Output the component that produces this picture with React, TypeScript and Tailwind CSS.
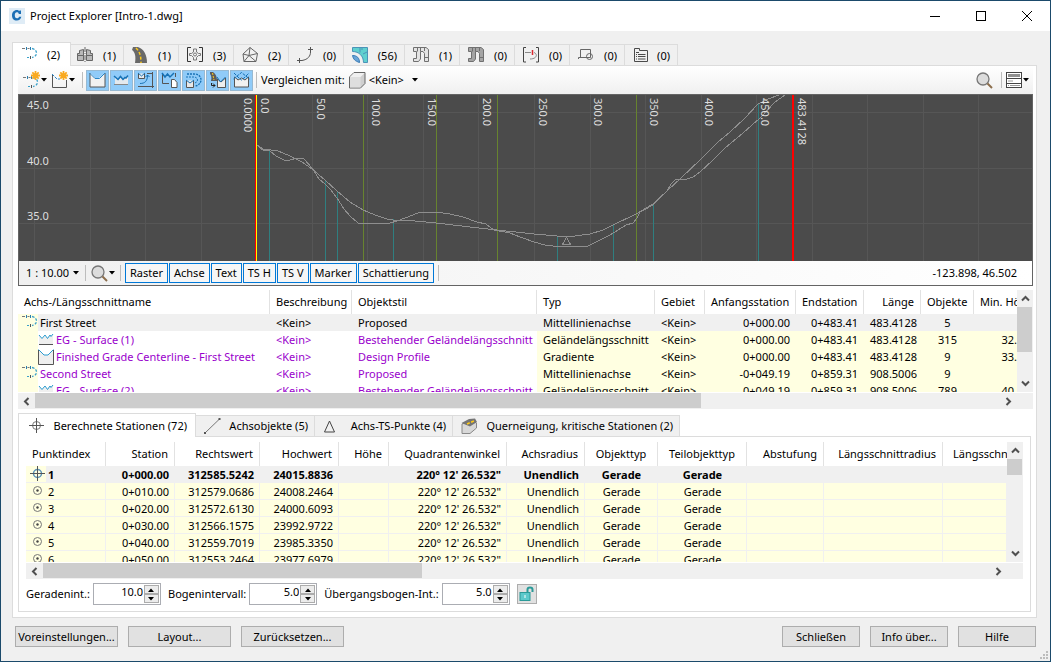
import React, { useState } from 'react';
import clsx from 'clsx';

type IconProps = { className?: string };

const Caret = ({ className }: IconProps) => (
  <svg width="6" height="4" viewBox="0 0 6 4" className={clsx('shrink-0', className)} aria-hidden="true">
    <path d="M0 0H6L3 3.5Z" fill="#000" />
  </svg>
);

/* ---------- icons ---------- */

const LogoIcon = () => (
  <svg width="16" height="16" viewBox="0 0 16 16" aria-hidden="true">
    <rect width="16" height="16" fill="#dfecf6" />
    <path d="M12 2.500V6H9.800C9.600 4.700 8.800 4.300 7.900 4.300C6.300 4.300 5.800 5.700 5.800 7.300C5.800 9 6.500 10.300 8 10.300C9 10.300 9.700 9.800 10 8.800H12.300C11.900 11.200 10.300 12.500 7.800 12.500C4.700 12.500 3 10.400 3 7.400C3 4.300 4.900 2 7.900 2C9 2 9.700 2.400 10.200 3.100L10.600 2.500Z" fill="#1c6fb5" />
  </svg>
);

const AlignmentShape = () => (
  <g fill="none">
    <path d="M0 1.500H3M5.500 1.500H7.500" stroke="#777" />
    <path d="M4.500 0V3M8.500 0V3" stroke="#2a7fb0" />
    <path d="M10 1.500C13 2 14.500 4 14.500 6C14.500 8.500 12.500 10 10 10.500" stroke="#3aa0c9" strokeWidth="1.300" strokeDasharray="2.500 1.500" />
    <path d="M5 10.500H7" stroke="#3aa0c9" />
    <path d="M8.500 9V12" stroke="#555" />
  </g>
);

const AlignmentIcon = ({ className }: IconProps) => (
  <svg width="16" height="12" viewBox="0 0 16 12" className={clsx('shrink-0', className)} aria-hidden="true">
    <AlignmentShape />
  </svg>
);

const AssemblyIcon = () => (
  <svg width="16" height="16" viewBox="0 0 16 16" fill="#b9b9b9" stroke="#666" aria-hidden="true">
    <path d="M2.500 3.500L6.500 2.500V8.500H0.500V6.500H2.500ZM0.500 8.500H6.500V13.500H0.500Z" />
    <path d="M13.500 3.500L9.500 2.500V8.500H15.500V6.500H13.500ZM9.500 8.500H15.500V13.500H9.500Z" />
    <path d="M8 0V16" strokeDasharray="5 1 1 1" />
  </svg>
);

const RoadIcon = () => (
  <svg width="16" height="16" viewBox="0 0 16 16" aria-hidden="true">
    <path d="M1 0H6C12 2 15 8 15 16H3C4 9 3 5 0 3Z" fill="#696969" />
    <path d="M4 1C8 5 9 9 9 16" stroke="#ffca18" strokeWidth="1.500" strokeDasharray="3 2" fill="none" />
  </svg>
);

const IntersectionIcon = () => (
  <svg width="16" height="16" viewBox="0 0 16 16" fill="none" aria-hidden="true">
    <path d="M4 0.500H0.500V14.500H4M12 0.500H15.500V14.500H12" stroke="#333" />
    <path d="M6.500 2V5L4.500 6.500H2.500V8.500H4.500L6.500 10.500V13H9.500V10.500L11.500 8.500H13.500V6.500H11.500L9.500 5V2Z" stroke="#777" />
    <circle cx="8" cy="7.500" r="1.500" stroke="#777" />
  </svg>
);

const SurfaceIcon = () => (
  <svg width="16" height="16" viewBox="0 0 16 16" fill="none" stroke="#666" aria-hidden="true">
    <path d="M8 0.500L1 7L2 14.500H14L15.500 6.500ZM8 0.500L7 8.500L1 7M7 8.500L15.500 6.500M7 8.500L2 14.500M7 8.500L14 14.500" />
  </svg>
);

const FeatureLineIcon = () => (
  <svg width="16" height="16" viewBox="0 0 16 16" fill="none" stroke="#555" aria-hidden="true">
    <path d="M0 13.500H5M2.500 11V16M11 2.500H16M13.500 0V5" />
    <path d="M5 13.500C11 12.500 13.500 9 13.500 5" />
  </svg>
);

const ParcelIcon = () => (
  <svg width="16" height="16" viewBox="0 0 16 16" aria-hidden="true">
    <path d="M0.500 0.500H15.500V15.500H11.500C11.500 9 7 4.500 0.500 4.500Z" fill="#5fd0cf" stroke="#4b93b8" />
    <path d="M8 1V5.500M11 7L15 5M10 1V3" stroke="#4b93b8" />
    <path d="M0.500 8.500C5 8.500 7.500 11 7.500 15.500C3 14 1.500 12.500 0.500 8.500Z" fill="#6aa5d8" stroke="#397bb5" />
  </svg>
);

const PipeIcon = ({ dark }: { dark?: boolean }) => (
  <svg width="16" height="16" viewBox="0 0 16 16" fill={dark ? '#a4a4a4' : '#e4e4e4'} stroke="#707070" aria-hidden="true">
    <path d="M0.500 0.500H13L15.500 2.500V14.500H11.500V6.500L10 4.500H7.500V12L5.500 14.500H0.500V11.500H3.500V4.500H0.500Z" />
    <path d="M4.500 0.500V4.500M11.500 0.500V4M7.500 0.500V4.500M11.500 10.500H15.500" />
  </svg>
);

const PressureIcon = () => (
  <svg width="16" height="16" viewBox="0 0 16 16" fill="none" aria-hidden="true">
    <path d="M3 0.500H0.500V15H3M13 0.500H15.500V15H13" stroke="#444" />
    <path d="M2 5.500H8M11 5.500C15 7 14 12 7 12" stroke="#888" />
    <path d="M9.500 3V8" stroke="#d9272e" strokeWidth="1.500" />
  </svg>
);

const ShapeIcon = () => (
  <svg width="16" height="16" viewBox="0 0 16 16" fill="none" stroke="#666" aria-hidden="true">
    <path d="M2.500 2.500H12.500V10.500H0.500V12M2.500 2.500V10.500" />
    <circle cx="11.500" cy="9.500" r="3" />
  </svg>
);

const ReportIcon = () => (
  <svg width="16" height="16" viewBox="0 0 16 16" fill="none" stroke="#4a4a4a" aria-hidden="true">
    <path d="M1.500 14.500V1.500H6.500V3.500H14.500V14.500Z" />
    <path d="M3 5.500H6M3 7.500H4M5 7.500H12.500M3 9.500H4M5 9.500H12.500M3 12H4M5 12H12.500" />
  </svg>
);

const Star = () => (
  <path d="M12.500 0V9M8 4.500H17M9.300 1.300L15.700 7.700M15.700 1.300L9.300 7.700" stroke="#f9a91f" strokeWidth="1.800" fill="none" />
);

const NewAlignmentIcon = () => (
  <svg width="18" height="18" viewBox="0 0 18 18" aria-hidden="true">
    <g transform="translate(0 5)"><AlignmentShape /></g>
    <Star />
  </svg>
);

const NewProfileIcon = () => (
  <svg width="18" height="18" viewBox="0 0 18 18" aria-hidden="true">
    <path d="M1.500 3.500V16.500H15.500V9" stroke="#555" fill="none" />
    <path d="M1 3L6 8H9" stroke="#2a87c8" fill="none" strokeDasharray="3 1" />
    <Star />
  </svg>
);

const ProfileIcon = () => (
  <svg width="17" height="16" viewBox="0 0 17 16" fill="none" aria-hidden="true">
    <path d="M1 1V15H16V1" fill="#f1f1f1" stroke="#555" />
    <path d="M1.500 1L6 6H10L15.500 1V0H1.500Z" fill="#90cbf8" />
    <path d="M0.500 1L6 6.500H10.500L16 1" stroke="#2a87c8" />
  </svg>
);

const SurfaceProfileIcon = () => (
  <svg width="17" height="16" viewBox="0 0 17 16" fill="none" aria-hidden="true">
    <path d="M2 5L5 8L8 5L10 8L12 6L15 4V12H2Z" fill="#e4e9ee" />
    <path d="M1 12.500H15" stroke="#888" />
    <path d="M1 4L5 7.500L7.500 4.500L10 7.500L12 5.500L13 6L15 3.500" stroke="#1772b5" strokeWidth="1.500" />
  </svg>
);

const ViewFrameIcon = () => (
  <svg width="17" height="16" viewBox="0 0 17 16" fill="none" aria-hidden="true">
    <path d="M1.500 1.500V6.500H7.500V1.500" fill="#e4e9ee" stroke="#555" />
    <path d="M1 1L4.500 4L8 1M3 11.500C8 11.500 10.500 9 10.500 3M8.500 5L10.500 3L12.500 5" stroke="#1772b5" />
    <path d="M15.500 0V16M1 14.500H17M10 1.500H15" stroke="#555" />
  </svg>
);

const QuickProfileIcon = () => (
  <svg width="17" height="16" viewBox="0 0 17 16" fill="none" aria-hidden="true">
    <path d="M1.500 2V11.500H8M14.500 1V5" stroke="#555" />
    <path d="M1 1L4 5L6.500 2L9 5L13 1" stroke="#1772b5" strokeWidth="1.500" />
    <path d="M10.500 7.500H13.500L16 10.500V15.500H10.500Z" fill="#fff" stroke="#555" />
  </svg>
);

const SuperimposedIcon = () => (
  <svg width="17" height="16" viewBox="0 0 17 16" fill="none" aria-hidden="true">
    <path d="M2 2H9C14 2 16 5 16 8C16 11 13 14 10 14" stroke="#1772b5" strokeDasharray="2 1" strokeWidth="1.300" />
    <path d="M1 5H9C11 5 12.500 6.500 12.500 8S11 11 9 11" stroke="#1772b5" strokeDasharray="2 1" />
    <path d="M1.500 8.500V15.500H8.500V8.500" stroke="#555" fill="#e8e8e8" />
    <path d="M1 8L5 11L9 8" stroke="#1772b5" />
  </svg>
);

const CorridorProfileIcon = () => (
  <svg width="17" height="16" viewBox="0 0 17 16" fill="none" aria-hidden="true">
    <path d="M1 0H4C7 2 8 5 8 9H2C3 5 2 3 1 2Z" fill="#5c5c5c" />
    <path d="M3.500 1L5 8" stroke="#ffca18" strokeDasharray="2 1" />
    <path d="M8.500 7V15.500H16.500V6L12 10Z" fill="#eee" stroke="#555" />
    <path d="M8 5L11.500 10L16.500 5" stroke="#1772b5" />
    <path d="M2.500 11V13.500H6M4 11.500L6 13.500L4 15.500" stroke="#222" />
  </svg>
);

const CantProfileIcon = () => (
  <svg width="17" height="16" viewBox="0 0 17 16" fill="none" aria-hidden="true">
    <path d="M1.500 5V15H15.500V5L12 8L8.500 6L5 8Z" fill="#f1f1f1" stroke="#555" />
    <path d="M0.500 7L8.500 0.500L16.500 7M1 1L6 6L8.500 8L11 6L16 1" stroke="#1772b5" strokeDasharray="3 1" />
  </svg>
);

const CubeIcon = () => (
  <svg width="17" height="17" viewBox="0 0 17 17" stroke="#666" strokeLinejoin="round" aria-hidden="true">
    <path d="M0.500 5L5 0.500H16V11.500L11.500 16H0.500Z" fill="#cfcfcf" />
    <path d="M1 5H11.500V15.500H1Z" fill="#dedede" stroke="none" />
    <path d="M1 5L5 1H15.500L11.500 5Z" fill="#f0f0f0" stroke="none" />
  </svg>
);

const SearchIcon = () => (
  <svg width="17" height="17" viewBox="0 0 17 17" aria-hidden="true">
    <circle cx="7" cy="7" r="6" fill="#dcdcdc" stroke="#777" strokeWidth="1.300" />
    <path d="M11.500 11.500L16 16" stroke="#8b6d4b" strokeWidth="2" />
  </svg>
);

const PanelIcon = () => (
  <svg width="17" height="17" viewBox="0 0 17 17" aria-hidden="true">
    <rect x="0.500" y="0.500" width="15" height="15" fill="#fff" stroke="#444" />
    <path d="M2 3.500H14" stroke="#909090" strokeWidth="3" />
    <path d="M1 6.500H15M1 11.500H15" stroke="#444" />
    <path d="M2 9H7M2 13.500H3M4 13.500H14" stroke="#999" />
  </svg>
);

const TreeSurfaceIcon = () => (
  <svg width="16" height="14" viewBox="0 0 16 14" fill="none" className="shrink-0" aria-hidden="true">
    <path d="M1 2L4 5L7 3L9 5L12 2L15 2V11H1Z" fill="#efefef" />
    <path d="M1 11.500H15" stroke="#555" />
    <path d="M1 2L4 5.500L7 2L9.500 5.500L12 2L13 3.500L15 1" stroke="#2a9bd0" />
  </svg>
);

const TreeProfileIcon = () => (
  <svg width="16" height="16" viewBox="0 0 16 16" fill="none" className="shrink-0" aria-hidden="true">
    <path d="M0.500 1L6 6H10L15.500 1V15.500H0.500Z" fill="#efefef" />
    <path d="M0.500 1V15.500H15.500V1" stroke="#555" />
    <path d="M0.500 0.500L6 6H10L15.500 0.500" stroke="#2a9bd0" />
  </svg>
);

const CrosshairIcon = ({ blue }: { blue?: boolean }) => (
  <svg width="15" height="15" viewBox="0 0 15 15" fill="none" stroke="#555" aria-hidden="true">
    <circle cx="7.500" cy="7.500" r="4" stroke={blue ? '#5a93b8' : '#777'} strokeWidth={blue ? 1.5 : 1} />
    <path d="M0 7.500H15M7.500 0V15" />
  </svg>
);

const PointIcon = () => (
  <svg width="15" height="15" viewBox="0 0 15 15" fill="none" aria-hidden="true">
    <circle cx="7.500" cy="7.500" r="4" stroke="#777" />
    <circle cx="7.500" cy="7.500" r="1.200" fill="#444" />
  </svg>
);

const LineIcon = () => (
  <svg width="17" height="16" viewBox="0 0 17 16" aria-hidden="true">
    <path d="M1.500 14.500L15 1.500" stroke="#777" />
    <path d="M0 14H2V16H0ZM14.500 0H16.500V2H14.500Z" fill="#555" />
  </svg>
);

const TriangleIcon = () => (
  <svg width="13" height="13" viewBox="0 0 13 13" fill="none" stroke="#444" aria-hidden="true">
    <path d="M6.500 1L11.500 12H1.500Z" />
  </svg>
);

const SuperelevationIcon = () => (
  <svg width="17" height="16" viewBox="0 0 17 16" aria-hidden="true">
    <path d="M1 6L10 2L15.500 5V10L9 15.500H1Z" fill="#d8d8d8" stroke="#888" />
    <path d="M0.500 5L8 1L14 0.500L16 4L9 8.500Z" fill="#757575" />
    <path d="M6 6L14 2.500" stroke="#ffca18" strokeWidth="1.500" strokeDasharray="3 1.500" />
  </svg>
);

const LockIcon = () => (
  <svg width="16" height="16" viewBox="0 0 16 16" aria-hidden="true">
    <path d="M8.500 6V3.500Q8.500 1.500 11 1.500T13.500 3.500V6" fill="none" stroke="#2b9a98" strokeWidth="2" />
    <rect x="1" y="6.500" width="10" height="8" fill="#5cc9cb" stroke="#2b9a98" />
    <path d="M6 9V12" stroke="#fff" />
  </svg>
);

/* ---------- scroll bars ---------- */

const Arrow = ({ dir }: { dir: 'up' | 'down' | 'left' | 'right' }) => (
  <svg
    width="9"
    height="9"
    viewBox="0 0 9 9"
    fill="none"
    stroke="#505050"
    strokeWidth="2"
    aria-hidden="true"
    className={clsx(dir === 'right' && 'rotate-90', dir === 'down' && 'rotate-180', dir === 'left' && '-rotate-90')}
  >
    <path d="M1 6.500L4.500 3L8 6.500" />
  </svg>
);

const VScroll = ({ thumb }: { thumb: string }) => (
  <div className="flex w-4 shrink-0 flex-col bg-[#f0f0f0]">
    <div className="flex h-[17px] items-center justify-center"><Arrow dir="up" /></div>
    <div className="mr-px flex-1">
      <div className={clsx('bg-[#cdcdcd]', thumb)} />
    </div>
    <div className="flex h-[17px] items-center justify-center"><Arrow dir="down" /></div>
  </div>
);

const HScroll = ({ thumb }: { thumb: string }) => (
  <div className="mt-px flex h-4 bg-[#f0f0f0] pr-4">
    <div className="flex w-[17px] items-center justify-center"><Arrow dir="left" /></div>
    <div className="flex-1 pb-px">
      <div className={clsx('h-full bg-[#cdcdcd]', thumb)} />
    </div>
    <div className="flex w-[17px] items-center justify-center"><Arrow dir="right" /></div>
  </div>
);

/* ---------- data ---------- */

const OBJECT_TABS = [
  { name: 'Baugruppen', count: 1, icon: <AssemblyIcon />, className: 'w-[53px] pl-1.5' },
  { name: '3D-Profilkörper', count: 1, icon: <RoadIcon />, className: 'w-[55px] pl-2' },
  { name: 'Knotenpunkte', count: 3, icon: <IntersectionIcon />, className: 'w-[55px] pl-2' },
  { name: 'DGMs', count: 2, icon: <SurfaceIcon />, className: 'w-[55px] pl-2' },
  { name: 'Elementkanten', count: 0, icon: <FeatureLineIcon />, className: 'w-[55px] pl-2' },
  { name: 'Parzellen', count: 56, icon: <ParcelIcon />, className: 'w-[61px] pl-2' },
  { name: 'Kanalnetze', count: 1, icon: <PipeIcon />, className: 'w-[55px] pl-2' },
  { name: 'Druckleitungsnetze', count: 0, icon: <PipeIcon dark />, className: 'w-[55px] pl-2' },
  { name: 'Querprofillinien', count: 0, icon: <PressureIcon />, className: 'w-[55px] pl-2' },
  { name: 'Planrahmen', count: 0, icon: <ShapeIcon />, className: 'w-[55px] pl-2' },
  { name: 'Objektsätze', count: 0, icon: <ReportIcon />, className: 'w-[53px] pl-2' },
];

const PROFILE_TOOLS = [ProfileIcon, SurfaceProfileIcon, ViewFrameIcon, QuickProfileIcon, SuperimposedIcon, CorridorProfileIcon, CantProfileIcon];

const VIEW_OPTIONS = ['Raster', 'Achse', 'Text', 'TS H', 'TS V', 'Marker', 'Schattierung'];

interface ProfileRow {
  name: string;
  kind: 'alignment' | 'surface' | 'profile';
  style: string;
  type: string;
  start: string;
  end: string;
  length: string;
  objects: string;
  min: string;
}

const PROFILE_ROWS: ProfileRow[] = [
  { name: 'First Street', kind: 'alignment', style: 'Proposed', type: 'Mittellinienachse', start: '0+000.00', end: '0+483.41', length: '483.4128', objects: '5', min: '' },
  { name: 'EG - Surface (1)', kind: 'surface', style: 'Bestehender Geländelängsschnitt', type: 'Geländelängsschnitt', start: '0+000.00', end: '0+483.41', length: '483.4128', objects: '315', min: '32.' },
  { name: 'Finished Grade Centerline - First Street', kind: 'profile', style: 'Design Profile', type: 'Gradiente', start: '0+000.00', end: '0+483.41', length: '483.4128', objects: '9', min: '33.' },
  { name: 'Second Street', kind: 'alignment', style: 'Proposed', type: 'Mittellinienachse', start: '-0+049.19', end: '0+859.31', length: '908.5006', objects: '9', min: '' },
  { name: 'EG - Surface (2)', kind: 'surface', style: 'Bestehender Geländelängsschnitt', type: 'Geländelängsschnitt', start: '0+049.19', end: '0+859.31', length: '908.5006', objects: '789', min: '40.' },
];

const STATION_ROWS = [
  ['0+000.00', '312585.5242', '24015.8836'],
  ['0+010.00', '312579.0686', '24008.2464'],
  ['0+020.00', '312572.6130', '24000.6093'],
  ['0+030.00', '312566.1575', '23992.9722'],
  ['0+040.00', '312559.7019', '23985.3350'],
  ['0+050.00', '312553.2464', '23977.6979'],
];

/* ---------- profile view ---------- */

const EG_LINE = '257,145 260,148 263,150 269,150 276,156 284,160 290,160 297,158 304,159 312,168 319,179 325,184 331,190 337,198 344,209 350,216 358,223 390,223 397,221 405,218 413,215 420,212 436,212 450,214 463,217 477,222 486,224 494,230 510,233 520,237 534,242 545,245 553,246 588,246 596,242 610,235 626,225 633,223 637,218 640,212 653,205 660,198 667,191 671,184 676,179 687,179 693,177 700,172 713,160 725,148 743,133 760,118 775,102 785,95';
const FG_LINE = '257,145 263,149 278,151 290,156 302,162 312,169 325,180 337,191 350,202 363,210 375,215 387,219 393,220 405,220 436,223 470,227 497,230 534,234 557,236 575,236 590,234 603,230 613,225 636,214 653,204 667,191 681,178 700,160 718,142 730,132 745,118 758,104 768,99 779,95';

const GRID_X = Array.from({ length: 40 }, (_, i) => Math.round(34 + i * 55.55));
const TANGENTS: [number, number][] = [[269, 150], [325, 180], [337, 191], [393, 219], [557, 236], [613, 225], [653, 205], [758, 104]];
const STATIONS: [number, string][] = [[244, '0.0000'], [261, '0.0'], [317, '50.0'], [372, '100.0'], [428, '150.0'], [483, '200.0'], [539, '250.0'], [594, '300.0'], [650, '350.0'], [705, '400.0'], [761, '450.0'], [798, '483.4128']];

const ProfileView = () => (
  <svg className="block h-full w-full text-[11px]" aria-label="Längsschnitt">
    <g transform="translate(-19 -95)" shapeRendering="crispEdges">
      {GRID_X.map((x) => <rect key={x} x={x} y="95" width="1" height="400" fill="#565656" />)}
      {[112, 168, 223].map((y) => <rect key={y} x="19" y={y} width="3000" height="1" fill="#565656" />)}
      {[363, 436, 497, 636].map((x) => <rect key={x} x={x} y="95" width="1" height="400" fill="#67832f" />)}
      {TANGENTS.map(([x, y]) => <rect key={x} x={x} y={y} width="1" height="400" fill="#2f7f80" />)}
      <polyline points={EG_LINE} fill="none" stroke="#8e8e8e" />
      <polyline points={FG_LINE} fill="none" stroke="#8e8e8e" />
      <path d="M566.500 237L570.500 244.500H562.500Z" fill="none" stroke="#8e8e8e" />
      <rect x="255" y="95" width="1" height="400" fill="#f00" />
      <rect x="256" y="95" width="1" height="400" fill="#ff0" />
      <rect x="792" y="95" width="2" height="400" fill="#f00" />
    </g>
    <g transform="translate(-19 -95)" fill="#dedede">
      <text x="27" y="109">45.0</text>
      <text x="27" y="165">40.0</text>
      <text x="27" y="220">35.0</text>
      {STATIONS.map(([x, label]) => (
        <text key={label} transform={`translate(${x} 98) rotate(90)`}>{label}</text>
      ))}
    </g>
  </svg>
);

/* ---------- tables ---------- */

const TH = ({ children, className }: { children: React.ReactNode; className?: string }) => (
  <th className={clsx('h-6 overflow-hidden border-r border-[#e2e2e2] px-1.5 font-normal', className)}>{children}</th>
);

const ProfileTable = () => (
  <div className="mt-1 shrink-0">
    <div className="flex h-[102px] overflow-hidden">
      <div className="min-w-0 flex-1 overflow-hidden">
        <table className="w-full table-fixed border-separate border-spacing-0 text-left whitespace-nowrap">
          <colgroup>
            <col className="w-[252px]" />
            <col className="w-[82px]" />
            <col className="w-[185px]" />
            <col className="w-[118px]" />
            <col className="w-[50px]" />
            <col className="w-[91px]" />
            <col className="w-[68px]" />
            <col className="w-[57px]" />
            <col className="w-[53px]" />
            <col />
          </colgroup>
          <thead>
            <tr>
              <TH>Achs-/Längsschnittname</TH>
              <TH>Beschreibung</TH>
              <TH>Objektstil</TH>
              <TH>Typ</TH>
              <TH>Gebiet</TH>
              <TH className="text-right">Anfangsstation</TH>
              <TH className="text-right">Endstation</TH>
              <TH className="text-right">Länge</TH>
              <TH className="text-center">Objekte</TH>
              <TH className="border-r-0 pr-0">Min. Höhe</TH>
            </tr>
          </thead>
          <tbody>
            {PROFILE_ROWS.map((row, i) => {
              const edit = i === 0 ? 'bg-[#f0f0f0]' : 'text-[#9900cc]';
              const ro = i === 0 ? 'bg-[#f0f0f0]' : 'bg-[#ffffe1]';
              return (
                <tr key={row.name} className="h-[17px] leading-[17px]">
                  <td className={clsx('p-0', edit)}>
                    <div className="flex h-[17px] items-center">
                      <span className="flex h-full w-5 shrink-0 items-start justify-end bg-[#ffffe1] pt-px">
                        {row.kind === 'alignment' && <AlignmentIcon />}
                      </span>
                      {row.kind === 'surface' && <TreeSurfaceIcon />}
                      {row.kind === 'profile' && <TreeProfileIcon />}
                      <span className="pl-0.5">{row.name}</span>
                    </div>
                  </td>
                  <td className={clsx('px-1.5 py-0', edit)}>&lt;Kein&gt;</td>
                  <td className={clsx('px-1.5 py-0', edit)}>{row.style}</td>
                  <td className={clsx('px-1.5 py-0', ro)}>{row.type}</td>
                  <td className={clsx('px-1.5 py-0', ro)}>&lt;Kein&gt;</td>
                  <td className={clsx('px-1.5 py-0 text-right', ro)}>{row.start}</td>
                  <td className={clsx('px-1.5 py-0 text-right', ro)}>{row.end}</td>
                  <td className={clsx('px-1.5 py-0 text-right', ro)}>{row.length}</td>
                  <td className={clsx('px-1.5 py-0 text-center', ro)}>{row.objects}</td>
                  <td className={clsx('p-0 text-right', ro)}>{row.min}</td>
                </tr>
              );
            })}
          </tbody>
        </table>
      </div>
      <VScroll thumb="h-[66%]" />
    </div>
    <HScroll thumb="w-[69%]" />
  </div>
);

const StationTable = () => (
  <div className="mx-[7px]">
    <div className="flex h-[120px] overflow-hidden">
      <div className="min-w-0 flex-1 overflow-hidden">
        <table className="w-full table-fixed border-separate border-spacing-0 text-right whitespace-nowrap">
          <colgroup>
            <col className="w-20" />
            <col className="w-[69px]" />
            <col className="w-[85px]" />
            <col className="w-[79px]" />
            <col className="w-[50px]" />
            <col className="w-[118px]" />
            <col className="w-[78px]" />
            <col className="w-[73px]" />
            <col className="w-[89px]" />
            <col className="w-[77px]" />
            <col className="w-[119px]" />
            <col />
          </colgroup>
          <thead>
            <tr>
              <TH className="text-left">Punktindex</TH>
              <TH>Station</TH>
              <TH>Rechtswert</TH>
              <TH>Hochwert</TH>
              <TH>Höhe</TH>
              <TH>Quadrantenwinkel</TH>
              <TH>Achsradius</TH>
              <TH className="text-center">Objekttyp</TH>
              <TH className="text-center">Teilobjekttyp</TH>
              <TH>Abstufung</TH>
              <TH>Längsschnittradius</TH>
              <TH className="border-r-0 pr-0 pl-2.5 text-left">Längsschnitt</TH>
            </tr>
          </thead>
          <tbody>
            {STATION_ROWS.map(([station, easting, northing], i) => {
              const selected = i === 0;
              const cell = clsx('h-[17px] border-r border-b border-[#f0f0f0] pt-0.5 pr-[5px] pb-0 pl-1.5', selected ? 'bg-[#f0f0f0]' : 'bg-[#ffffe1]');
              return (
                <tr key={station} className={clsx('h-[17px] leading-[14px]', selected && 'font-bold')}>
                  <td className={clsx('h-[17px] border-r border-b border-[#f0f0f0] p-0', selected ? 'bg-[#f0f0f0]' : 'bg-[#ffffe1]')}>
                    <div className="flex h-4 items-center">
                      <span className="flex h-full w-5 items-start justify-end bg-[#ffffe1] pr-px">
                        {selected ? <CrosshairIcon blue /> : <PointIcon />}
                      </span>
                      <span className="pt-0.5 pl-0.5">{i + 1}</span>
                    </div>
                  </td>
                  <td className={cell}>{station}</td>
                  <td className={cell}>{easting}</td>
                  <td className={cell}>{northing}</td>
                  <td className={cell} />
                  <td className={cell}>220° 12' 26.532"</td>
                  <td className={cell}>Unendlich</td>
                  <td className={clsx(cell, 'text-center')}>Gerade</td>
                  <td className={clsx(cell, 'text-center')}>Gerade</td>
                  <td className={cell} />
                  <td className={cell} />
                  <td className={cell} />
                </tr>
              );
            })}
          </tbody>
        </table>
      </div>
      <VScroll thumb="h-[19%]" />
    </div>
    <HScroll thumb="w-[40%]" />
  </div>
);

/* ---------- controls ---------- */

const Separator = () => <span className="h-4 w-px shrink-0 bg-[#bdbdbd]" />;

const Spinner = ({ id, label, initial }: { id: string; label: string; initial: number }) => {
  const [value, setValue] = useState(initial);
  return (
    <div className="flex items-center gap-[3px]">
      <label htmlFor={id}>{label}</label>
      <div className="flex h-[22px] w-[68px] border border-[#abadb3] bg-white p-px">
        <input id={id} readOnly value={value.toFixed(1)} className="min-w-0 flex-1 pr-px pb-1 text-right outline-none" />
        <div className="flex w-[15px] flex-col bg-[#f0f0f0]">
          <button type="button" aria-label="Erhöhen" onClick={() => setValue(value + 1)} className="flex flex-1 items-center justify-center border border-[#acacac] bg-[#ececec]">
            <Caret className="rotate-180" />
          </button>
          <button type="button" aria-label="Verringern" onClick={() => setValue(value - 1)} className="flex flex-1 items-center justify-center border border-[#acacac] bg-[#ececec]">
            <Caret />
          </button>
        </div>
      </div>
    </div>
  );
};

const DialogButton = ({ children, className }: { children: React.ReactNode; className: string }) => (
  <button type="button" className={clsx('h-[21px] border border-[#adadad] bg-[#e1e1e1]', className)}>{children}</button>
);

const STATION_TABS = [
  { label: 'Achsobjekte (5)', icon: <LineIcon />, className: 'w-[119px]' },
  { label: 'Achs-TS-Punkte (4)', icon: <TriangleIcon />, className: 'w-[138px]' },
  { label: 'Querneigung, kritische Stationen (2)', icon: <SuperelevationIcon />, className: 'w-[227px]' },
];

export default function App() {
  const [options, setOptions] = useState<string[]>(VIEW_OPTIONS);

  const toggleOption = (name: string) =>
    setOptions(options.includes(name) ? options.filter((o) => o !== name) : [...options, name]);

  return (
    <div className="flex h-screen flex-col overflow-hidden border border-[#1b4a6b] bg-[#f0f0f0] font-['Noto_Sans','Open_Sans',sans-serif] text-[11px] leading-4 text-black">
      <header className="flex h-[30px] shrink-0 items-center bg-white pl-2">
        <LogoIcon />
        <h1 className="pl-[5px]">Project Explorer [Intro-1.dwg]</h1>
        <div className="ml-auto flex h-full">
          <button type="button" aria-label="Minimieren" className="flex w-[46px] items-center justify-center">
            <svg width="10" height="10"><path d="M0 5.500H10" stroke="#000" /></svg>
          </button>
          <button type="button" aria-label="Maximieren" className="flex w-[46px] items-center justify-center">
            <svg width="10" height="10"><rect x="0.500" y="0.500" width="9" height="9" fill="none" stroke="#000" /></svg>
          </button>
          <button type="button" aria-label="Fenster schließen" className="flex w-[46px] items-center justify-center">
            <svg width="10" height="10"><path d="M0 0L10 10M10 0L0 10" stroke="#000" /></svg>
          </button>
        </div>
      </header>

      <main className="flex min-h-0 flex-1 flex-col pt-[11px] pr-[13px] pl-[11px]">
        <nav className="flex shrink-0 items-end">
          <button type="button" className="relative z-10 -mb-px flex h-6 w-[59px] items-center justify-between border border-b-0 border-[#dcdcdc] bg-white pr-2.5 pl-[9px]">
            <AlignmentIcon className="-mt-1" />
            (2)
          </button>
          {OBJECT_TABS.map((tab) => (
            <button
              key={tab.name}
              type="button"
              aria-label={`${tab.name} (${tab.count})`}
              className={clsx('flex h-[21px] items-center justify-between border-t border-r border-[#dcdcdc] pr-[7px]', tab.className)}
            >
              {tab.icon}
              <span className="pt-0.5">({tab.count})</span>
            </button>
          ))}
        </nav>

        <section className="flex min-h-0 flex-1 flex-col border border-[#dcdcdc] bg-white pr-[3px] pb-[5px] pl-[5px]">
          <div className="flex h-7 shrink-0 items-center bg-linear-to-b from-white to-[#f0f0f0] pr-1 pl-[5px]">
            <button type="button" aria-label="Achse erstellen" className="flex items-center"><NewAlignmentIcon /><Caret /></button>
            <button type="button" aria-label="Längsschnitt erstellen" className="ml-1 flex items-center"><NewProfileIcon /><Caret /></button>
            <span className="ml-[7px] flex items-center"><Separator /></span>
            <div className="mx-[3px] flex gap-px">
              {PROFILE_TOOLS.map((Icon, i) => (
                <button key={i} type="button" aria-label={`Werkzeug ${i + 1}`} className="flex h-[21px] w-[23px] items-center justify-center border border-[#97b9d2] bg-[#90cbf8]">
                  <Icon />
                </button>
              ))}
            </div>
            <Separator />
            <label htmlFor="compare" className="mx-1">Vergleichen mit:</label>
            <CubeIcon />
            <select id="compare" className="ml-[3px] w-[43px] appearance-none bg-transparent outline-none">
              <option>{'<Kein>'}</option>
            </select>
            <Caret />
            <div className="ml-auto flex items-center gap-2">
              <button type="button" aria-label="Suchen"><SearchIcon /></button>
              <Separator />
              <button type="button" aria-label="Ansicht" className="-ml-1 flex items-center"><PanelIcon /><Caret /></button>
            </div>
          </div>

          <div className="flex min-h-[120px] flex-1 flex-col border border-[#646464]">
            <div className="min-h-0 flex-1 bg-[#4b4b4b]">
              <ProfileView />
            </div>
            <div className="flex h-6 shrink-0 items-center bg-linear-to-r from-[#f0f0f0] to-white pr-[15px] pl-[7px]">
              <select aria-label="Maßstab" className="w-[47px] appearance-none bg-transparent outline-none">
                <option>1 : 10.00</option>
              </select>
              <Caret className="mr-1.5" />
              <Separator />
              <button type="button" aria-label="Zoom" className="mx-[5px] flex items-center gap-px"><SearchIcon /><Caret /></button>
              <Separator />
              <div className="mx-1 flex gap-px">
                {VIEW_OPTIONS.map((name) => (
                  <button
                    key={name}
                    type="button"
                    aria-pressed={options.includes(name)}
                    onClick={() => toggleOption(name)}
                    className={clsx('h-5 border px-1', options.includes(name) ? 'border-[#0078d7] bg-[#f6f6f6]' : 'border-transparent')}
                  >
                    {name}
                  </button>
                ))}
              </div>
              <Separator />
              <span className="ml-auto">-123.898, 46.502</span>
            </div>
          </div>

          <ProfileTable />

          <nav className="mt-1 flex shrink-0 items-end">
            <button type="button" className="relative z-10 -mb-px flex h-6 w-[178px] items-center justify-between border border-b-0 border-[#dcdcdc] bg-white pr-2 pl-2.5">
              <CrosshairIcon />
              Berechnete Stationen (72)
            </button>
            {STATION_TABS.map((tab) => (
              <button key={tab.label} type="button" className={clsx('flex h-[21px] items-center justify-between border-t border-r border-[#dcdcdc] bg-[#f0f0f0] pr-1.5 pl-2', tab.className)}>
                {tab.icon}
                {tab.label}
              </button>
            ))}
          </nav>

          <div className="mr-0.5 shrink-0 border border-[#dcdcdc] pt-[5px] pb-1.5">
            <StationTable />
            <div className="mt-1 flex items-center gap-[7px] px-[7px]">
              <Spinner id="line-interval" label="Geradenint.:" initial={10} />
              <Spinner id="arc-interval" label="Bogenintervall:" initial={5} />
              <Spinner id="spiral-interval" label="Übergangsbogen-Int.:" initial={5} />
              <button type="button" aria-label="Sperren" className="flex size-5 items-center justify-center border border-[#adadad] bg-[#e1e1e1]">
                <LockIcon />
              </button>
            </div>
          </div>
        </section>
      </main>

      <footer className="relative flex shrink-0 gap-2.5 px-3.5 pt-2 pb-3.5">
        <DialogButton className="w-[103px]">Voreinstellungen...</DialogButton>
        <DialogButton className="w-[103px]">Layout...</DialogButton>
        <DialogButton className="w-[103px]">Zurücksetzen...</DialogButton>
        <DialogButton className="ml-auto w-[78px]">Schließen</DialogButton>
        <DialogButton className="w-[78px]">Info über...</DialogButton>
        <DialogButton className="w-[78px]">Hilfe</DialogButton>
        <svg width="8" height="8" viewBox="0 0 8 8" className="absolute right-0.5 bottom-0.5" fill="#bcbcbc" aria-hidden="true">
          <path d="M6 0H8V2H6ZM3 3H5V5H3ZM6 3H8V5H6ZM0 6H2V8H0ZM3 6H5V8H3ZM6 6H8V8H6Z" />
        </svg>
      </footer>
    </div>
  );
}
